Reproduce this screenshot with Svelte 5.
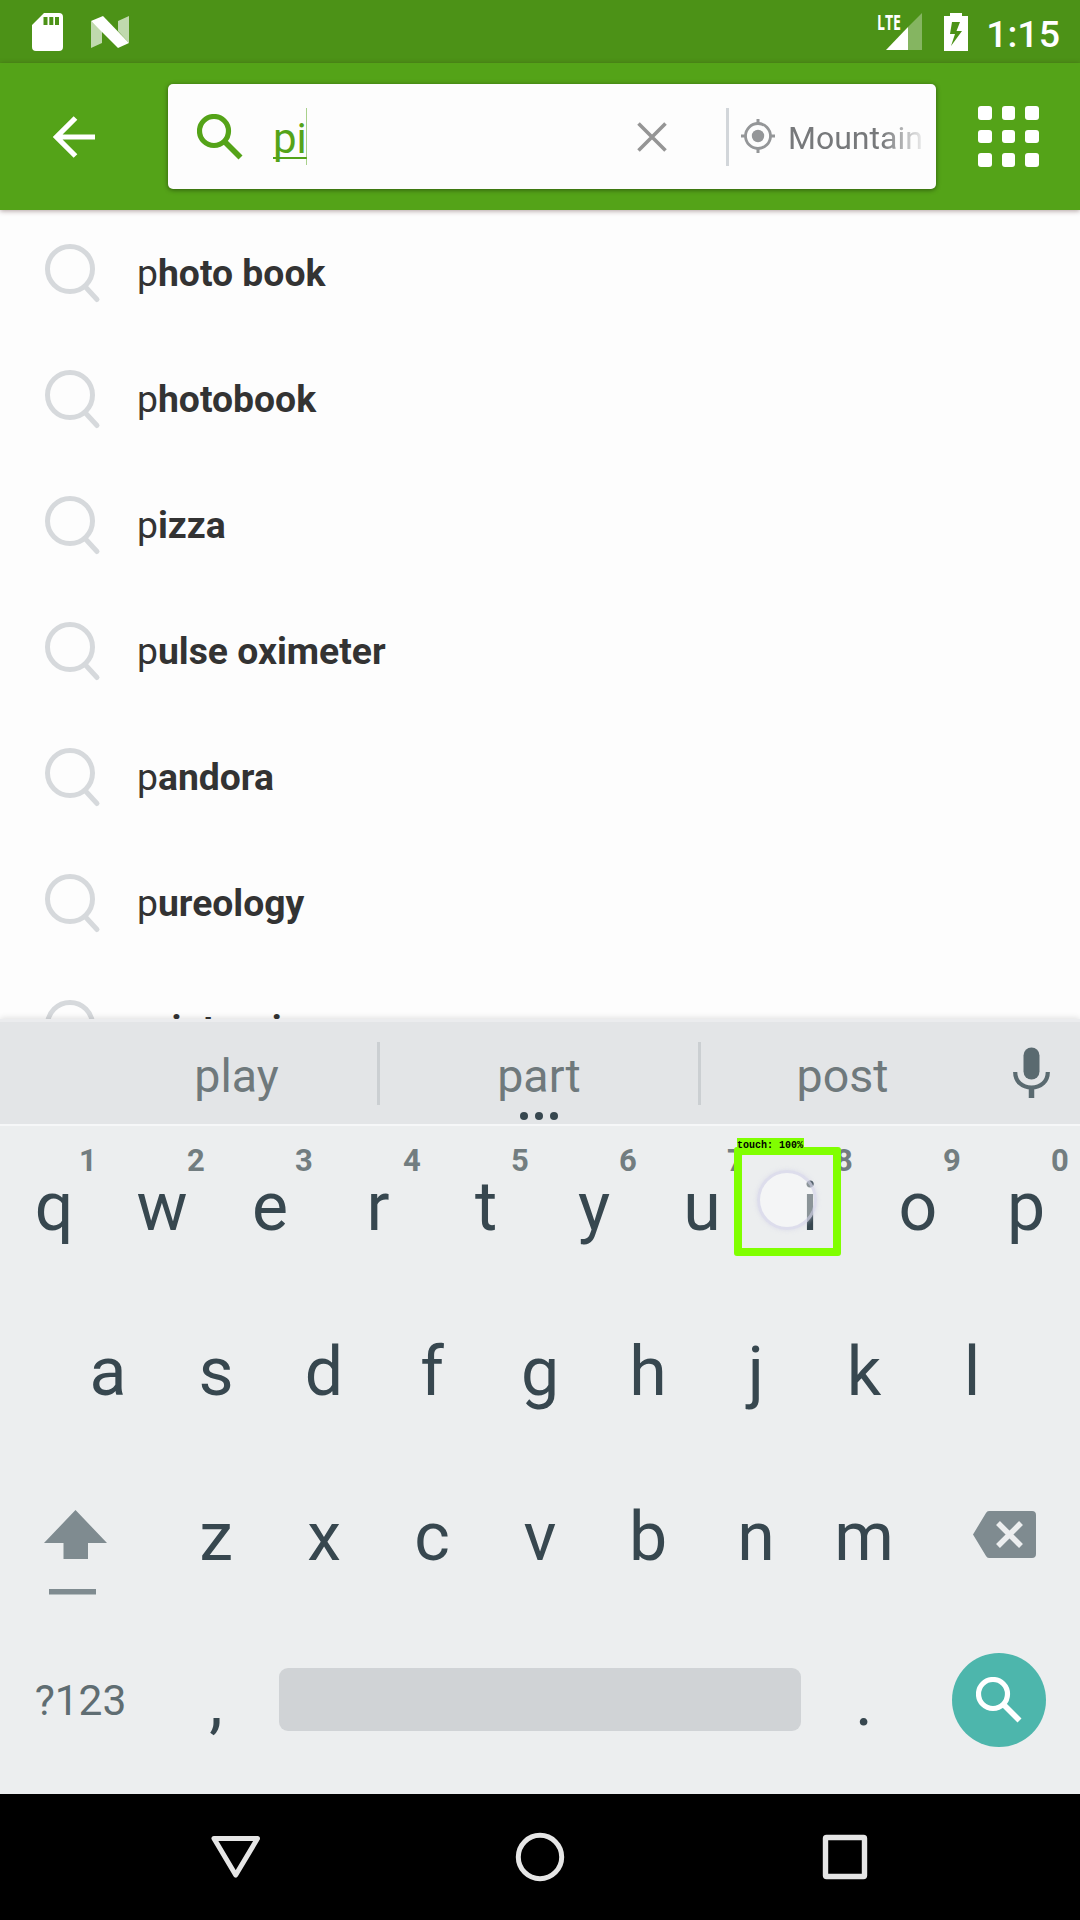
<script>
  const suggestions = ['hoto book', 'hotobook', 'izza', 'ulse oximeter', 'andora', 'ureology', 'rinter rims'];
  const words = ['play', 'part', 'post'];
  const topRow = [...'qwertyuiop'].map((letter, i) => ({ letter, hint: (i + 1) % 10 }));
  const homeRow = [...'asdfghjkl'];
  const bottomRow = [...'zxcvbnm'];
</script>

<div class="screen">
  <header class="status">
    <svg class="sd" viewBox="0 0 31 38" width="31" height="38">
      <path fill="#fff" fill-rule="evenodd" d="M12 0H27Q31 0 31 4V34Q31 38 27 38H4Q0 38 0 34V12ZM11.500 4V12H15.500V4ZM17.300 4V12H21.300V4ZM23 4V12H27V4Z" />
    </svg>
    <svg class="nougat" viewBox="0 0 38 32" width="38" height="32">
      <path fill="#fff" opacity=".65" d="M0 5L11 15V27L0 32ZM27 5L38 0V27L27 15Z" />
      <path fill="#fff" d="M0 5L12 0L38 27L27 32L0 5Z" />
    </svg>
    <span class="grow"></span>
    <svg class="signal" viewBox="0 0 46 38" width="46" height="38">
      <path fill="#fff" opacity=".32" d="M45 0V37H31V14Z" />
      <path fill="#fff" d="M31 14V37H9Z" />
      <text class="lte" x="0" y="17" textLength="24" lengthAdjust="spacingAndGlyphs">LTE</text>
    </svg>
    <svg class="battery" viewBox="0 0 24 38" width="24" height="38">
      <path fill="#fff" fill-rule="evenodd" d="M6 0H18V3H24V38H0V3H6ZM8 9L6 21H11L7 33L18 18H12.500L16 9Z" />
    </svg>
    <span class="time">1:15</span>
  </header>

  <div class="appbar">
    <svg class="back" viewBox="0 0 42 42" width="42" height="42">
      <path fill="none" stroke="#fff" stroke-width="5.200" d="M42 21H4M22.500 2L3.500 21L22.500 40" />
    </svg>
    <div class="searchbox">
      <svg class="lens" viewBox="0 0 46 46" width="46" height="46">
        <circle cx="17" cy="17" r="14.500" fill="none" stroke="#54a318" stroke-width="5.200" />
        <path stroke="#54a318" stroke-width="5.600" d="M27 27L43.500 43.500" />
      </svg>
      <span class="query"><span class="typed">pi</span></span>
      <svg class="clear" viewBox="0 0 30 30" width="30" height="30">
        <path stroke="#959595" stroke-width="3.600" d="M1.500 1.500L28.500 28.500M28.500 1.500L1.500 28.500" />
      </svg>
      <span class="split"></span>
      <svg class="target" viewBox="0 0 34 34" width="34" height="34">
        <circle cx="17" cy="17" r="12.500" fill="none" stroke="#949698" stroke-width="2.800" />
        <circle cx="17" cy="17" r="6.200" fill="#949698" />
        <path stroke="#949698" stroke-width="3" d="M17 0V5M17 29V34M0 17H5M29 17H34" />
      </svg>
      <span class="place">Mountain</span>
    </div>
    <div class="apps">
      {#each Array(9) as _}<i></i>{/each}
    </div>
  </div>

  <ul class="results">
    {#each suggestions as rest}
      <li>
        <svg viewBox="0 0 56 60" width="56" height="60">
          <circle cx="25" cy="25" r="22.500" fill="none" stroke="#d6d9dc" stroke-width="5" />
          <path stroke="#d6d9dc" stroke-width="5" stroke-linecap="round" d="M40.500 43L52 55.500" />
        </svg>
        <span>p<b>{rest}</b></span>
      </li>
    {/each}
  </ul>

  <div class="strip">
    {#each words as word, i}
      <span class="word">{word}{#if i === 1}<span class="more"><i></i><i></i><i></i></span>{/if}</span>
    {/each}
    <svg class="mic" viewBox="0 0 37 52" width="37" height="52">
      <rect x="10.500" y="0.500" width="16" height="32" rx="8" fill="#5a6a70" />
      <path fill="none" stroke="#5a6a70" stroke-width="4.200" d="M2.200 25C2.200 34.500 9 40.500 18.500 40.500S34.800 34.500 34.800 25" />
      <path stroke="#5a6a70" stroke-width="5.500" d="M18.500 40V51" />
    </svg>
  </div>

  <div class="keyboard">
    <div class="row">
      {#each topRow as key}
        <span class="key">{key.letter}<sup>{key.hint}</sup></span>
      {/each}
    </div>
    <div class="row home">
      {#each homeRow as letter}<span class="key">{letter}</span>{/each}
    </div>
    <div class="row">
      <svg class="shift" viewBox="0 0 162 165" width="162" height="165">
        <path fill="#7f8b90" d="M75.500 56L107 89H88V105H63.500V89H44ZM49 135H96V140.500H49Z" />
      </svg>
      {#each bottomRow as letter}<span class="key">{letter}</span>{/each}
      <svg class="erase" viewBox="0 0 162 165" width="162" height="165">
        <path fill="#7f8b90" d="M71 57H114Q118 57 118 61V100Q118 104 114 104H71Q69 104 68 102L55 80.500L68 59Q69 57 71 57Z" />
        <path stroke="#eceeef" stroke-width="5.500" d="M80 69L103 92M103 69L80 92" />
      </svg>
    </div>
    <div class="row">
      <span class="symbols">?123</span>
      <span class="key">,</span>
      <span class="space"></span>
      <span class="key dot">.</span>
      <span class="go">
        <svg viewBox="0 0 46 46" width="46" height="46">
          <circle cx="17" cy="17" r="14.500" fill="none" stroke="#fff" stroke-width="5.200" />
          <path stroke="#fff" stroke-width="5.600" d="M27 27L43.500 43.500" />
        </svg>
      </span>
    </div>
    <div class="touch">
      <span class="finger"></span>
      <span class="tag">touch: 100%</span>
    </div>
  </div>

  <nav>
    <svg viewBox="0 0 50 48" width="50" height="48">
      <path fill="none" stroke="#e6e6e6" stroke-width="5" stroke-linejoin="round" d="M3 5.500H46.500L24.700 42Z" />
    </svg>
    <svg viewBox="0 0 50 50" width="50" height="50">
      <circle cx="25" cy="25" r="21.700" fill="none" stroke="#e6e6e6" stroke-width="5" />
    </svg>
    <svg viewBox="0 0 50 48" width="50" height="48">
      <rect x="6.500" y="4.500" width="39" height="39" rx="1" fill="none" stroke="#e6e6e6" stroke-width="5.400" />
    </svg>
  </nav>
</div>

<style>
  :global(body) { margin: 0; }
  .screen {
    width: 1080px;
    height: 1920px;
    display: flex;
    flex-direction: column;
    overflow: hidden;
    background: #fdfdfd;
    font-family: Roboto, 'Liberation Sans', sans-serif;
  }
  svg { display: block; flex: none; }

  .status {
    height: 63px;
    flex: none;
    display: flex;
    align-items: center;
    padding: 0 20px 0 32px;
    box-sizing: border-box;
    background: #4c9217;
    color: #fff;
  }
  .nougat { margin-left: 28px; }
  .grow { flex: 1; }
  .signal { margin-right: 21px; overflow: visible; }
  .lte { font: 700 22px 'Open Sans', sans-serif; fill: #fff; }
  .battery { margin-right: 18px; }
  .time {
    font-size: 37.500px;
    font-weight: 500;
    line-height: 44px;
    padding-top: 4px;
  }

  .appbar {
    height: 147px;
    flex: none;
    display: flex;
    align-items: center;
    box-sizing: border-box;
    padding-left: 53px;
    background: #54a318;
    box-shadow: 0 1px 5px rgba(60, 20, 20, .4);
    position: relative;
    z-index: 1;
  }
  .searchbox {
    width: 768px;
    height: 105px;
    margin-left: 73px;
    box-sizing: border-box;
    padding-left: 29px;
    display: flex;
    align-items: center;
    background: #fdfdfd;
    border-radius: 5px;
    box-shadow: 0 1px 5px rgba(0, 0, 0, .45);
  }
  .query {
    width: 364px;
    margin-left: 30px;
    display: flex;
    font-size: 42px;
    line-height: 57px;
    color: #54a318;
  }
  .typed {
    width: 34px;
    height: 57px;
    padding-top: 2px;
    box-sizing: border-box;
    border-right: 1.500px solid #a9d18b;
    text-decoration: underline 2px;
    text-underline-offset: 4px;
    text-decoration-skip-ink: none;
  }
  .split { width: 3px; height: 58px; margin-left: 59px; background: #d2d6da; }
  .target { margin: 0 0 1px 12px; }
  .place {
    width: 134px;
    margin-left: 13px;
    padding-top: 3px;
    overflow: hidden;
    white-space: nowrap;
    font-size: 32px;
    line-height: 40px;
    color: #77797b;
    mask-image: linear-gradient(to right, #000 70%, rgba(0, 0, 0, .15));
  }
  .apps {
    display: grid;
    grid-template-columns: repeat(3, 13.500px);
    gap: 10px;
    margin-left: 42px;
  }
  .apps i { height: 13.500px; border-radius: 3px; background: #fff; }

  .results {
    height: 809px;
    flex: none;
    margin: 0;
    padding: 0;
    overflow: hidden;
    list-style: none;
  }
  li {
    height: 126px;
    display: flex;
    align-items: center;
    padding-left: 45px;
    color: #333;
    font-size: 37.300px;
    white-space: nowrap;
  }
  li svg { margin-top: 2px; }
  li span { margin-left: 36px; }
  li b { font-weight: 700; }

  .strip {
    height: 105px;
    flex: none;
    box-sizing: border-box;
    padding-left: 96px;
    border-top: 3px solid #ebecee;
    display: grid;
    grid-template-columns: 284px 321px 286px auto;
    align-items: center;
    background: #e3e5e7;
    box-shadow: 0 -1px 6px rgba(0, 0, 0, .12);
    position: relative;
  }
  .word {
    position: relative;
    height: 63px;
    box-sizing: border-box;
    border-right: 3px solid #cbcfd2;
    text-align: center;
    font-size: 46.500px;
    line-height: 69px;
    color: #6f797c;
  }
  .word:nth-child(3) { border-color: transparent; }
  .more {
    position: absolute;
    left: 0;
    right: 1px;
    top: 70px;
    display: flex;
    justify-content: center;
    gap: 7px;
  }
  .more i { width: 8px; height: 8px; border-radius: 50%; background: #37474f; }
  .mic { margin-left: 26px; }

  .keyboard {
    height: 670px;
    flex: none;
    position: relative;
    background: #eceeef;
    box-shadow: inset 0 2px #f6f7f8;
    color: #37474f;
  }
  .row { height: 165px; display: flex; align-items: center; }
  .home { padding-left: 54px; }
  .key {
    width: 108px;
    flex: none;
    position: relative;
    padding-top: 1px;
    text-align: center;
    font-size: 68px;
    line-height: 165px;
  }
  sup {
    position: absolute;
    left: 68px;
    top: 19px;
    width: 40px;
    font-size: 31px;
    font-weight: 700;
    line-height: 36px;
    color: #727d80;
  }
  .symbols { width: 162px; margin-bottom: 3px; text-align: center; text-indent: -1px; font-size: 42.500px; color: #5f6d72; }
  .space { width: 522px; height: 63px; margin: 0 0 4px 9px; border-radius: 9px; background: #d0d3d6; }
  .dot { margin-left: 9px; }
  .go {
    width: 94px;
    height: 94px;
    margin: 0 0 4px 34px;
    border-radius: 50%;
    display: flex;
    align-items: center;
    justify-content: center;
    background: #4db6ac;
  }
  .touch {
    position: absolute;
    left: 734px;
    top: 23px;
    width: 91px;
    height: 93px;
    border: 8px solid #80ff00;
    border-radius: 3px;
  }
  .finger {
    position: absolute;
    left: 15px;
    top: 15px;
    width: 54px;
    height: 54px;
    border: 3px solid rgba(205, 205, 228, .6);
    border-radius: 50%;
    background: rgba(255, 255, 255, .42);
    box-shadow: 0 0 4px rgba(205, 205, 228, .6);
  }
  .tag {
    position: absolute;
    left: -5px;
    top: -17px;
    width: 67px;
    height: 14px;
    background: #80ff00;
    color: #000;
    font: 700 10px/15px 'Liberation Mono', monospace;
    white-space: nowrap;
  }

  nav {
    height: 126px;
    flex: none;
    box-sizing: border-box;
    padding: 0 211px;
    display: flex;
    align-items: center;
    justify-content: space-between;
    background: #000;
  }
</style>
